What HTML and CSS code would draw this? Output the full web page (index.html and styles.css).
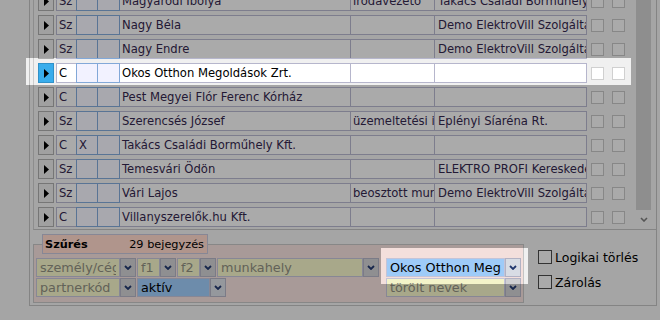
FILE: index.html
```html
<!DOCTYPE html>
<html lang="hu">
<head>
<meta charset="utf-8">
<title>Partnerek</title>
<link rel="stylesheet" href="styles.css">
</head>
<body>
<div class="screen">
  <div class="frame">
    <div class="grid">
      <div class="viewport">
        <div class="rows">
          <div class="row">
            <span class="rbtn"><svg width="5" height="9" viewBox="0 0 5 9"><polygon points="0,0 5,4.5 0,9"/></svg></span>
            <span class="cell c-type">Sz</span><span class="cell c-flag"></span><span class="cell c-flag"></span>
            <span class="cell c-name">Magyaródi Ibolya</span><span class="cell c-job">irodavezető</span><span class="cell c-comp">Takács Családi Borműhely Kft.</span>
            <span class="chk"></span><span class="chk"></span>
          </div>
          <div class="row">
            <span class="rbtn"><svg width="5" height="9" viewBox="0 0 5 9"><polygon points="0,0 5,4.5 0,9"/></svg></span>
            <span class="cell c-type">Sz</span><span class="cell c-flag"></span><span class="cell c-flag"></span>
            <span class="cell c-name">Nagy Béla</span><span class="cell c-job"></span><span class="cell c-comp">Demo ElektroVill Szolgáltató Kft.</span>
            <span class="chk"></span><span class="chk"></span>
          </div>
          <div class="row">
            <span class="rbtn"><svg width="5" height="9" viewBox="0 0 5 9"><polygon points="0,0 5,4.5 0,9"/></svg></span>
            <span class="cell c-type">Sz</span><span class="cell c-flag"></span><span class="cell c-flag"></span>
            <span class="cell c-name">Nagy Endre</span><span class="cell c-job"></span><span class="cell c-comp">Demo ElektroVill Szolgáltató Kft.</span>
            <span class="chk"></span><span class="chk"></span>
          </div>
          <div class="row sel">
            <span class="rbtn"><svg width="5" height="9" viewBox="0 0 5 9"><polygon points="0,0 5,4.5 0,9"/></svg></span>
            <span class="cell c-type">C</span><span class="cell c-flag"></span><span class="cell c-flag"></span>
            <span class="cell c-name">Okos Otthon Megoldások Zrt.</span><span class="cell c-job"></span><span class="cell c-comp"></span>
            <span class="chk"></span><span class="chk"></span>
          </div>
          <div class="row">
            <span class="rbtn"><svg width="5" height="9" viewBox="0 0 5 9"><polygon points="0,0 5,4.5 0,9"/></svg></span>
            <span class="cell c-type">C</span><span class="cell c-flag"></span><span class="cell c-flag"></span>
            <span class="cell c-name">Pest Megyei Flór Ferenc Kórház</span><span class="cell c-job"></span><span class="cell c-comp"></span>
            <span class="chk"></span><span class="chk"></span>
          </div>
          <div class="row">
            <span class="rbtn"><svg width="5" height="9" viewBox="0 0 5 9"><polygon points="0,0 5,4.5 0,9"/></svg></span>
            <span class="cell c-type">Sz</span><span class="cell c-flag"></span><span class="cell c-flag"></span>
            <span class="cell c-name">Szerencsés József</span><span class="cell c-job">üzemeltetési igazgató</span><span class="cell c-comp">Eplényi Síaréna Rt.</span>
            <span class="chk"></span><span class="chk"></span>
          </div>
          <div class="row">
            <span class="rbtn"><svg width="5" height="9" viewBox="0 0 5 9"><polygon points="0,0 5,4.5 0,9"/></svg></span>
            <span class="cell c-type">C</span><span class="cell c-flag">X</span><span class="cell c-flag"></span>
            <span class="cell c-name">Takács Családi Borműhely Kft.</span><span class="cell c-job"></span><span class="cell c-comp"></span>
            <span class="chk"></span><span class="chk"></span>
          </div>
          <div class="row">
            <span class="rbtn"><svg width="5" height="9" viewBox="0 0 5 9"><polygon points="0,0 5,4.5 0,9"/></svg></span>
            <span class="cell c-type">Sz</span><span class="cell c-flag"></span><span class="cell c-flag"></span>
            <span class="cell c-name">Temesvári Ödön</span><span class="cell c-job"></span><span class="cell c-comp">ELEKTRO PROFI Kereskedelmi Kft.</span>
            <span class="chk"></span><span class="chk"></span>
          </div>
          <div class="row">
            <span class="rbtn"><svg width="5" height="9" viewBox="0 0 5 9"><polygon points="0,0 5,4.5 0,9"/></svg></span>
            <span class="cell c-type">Sz</span><span class="cell c-flag"></span><span class="cell c-flag"></span>
            <span class="cell c-name">Vári Lajos</span><span class="cell c-job">beosztott munkatárs</span><span class="cell c-comp">Demo ElektroVill Szolgáltató Kft.</span>
            <span class="chk"></span><span class="chk"></span>
          </div>
          <div class="row">
            <span class="rbtn"><svg width="5" height="9" viewBox="0 0 5 9"><polygon points="0,0 5,4.5 0,9"/></svg></span>
            <span class="cell c-type">C</span><span class="cell c-flag"></span><span class="cell c-flag"></span>
            <span class="cell c-name">Villanyszerelők.hu Kft.</span><span class="cell c-job"></span><span class="cell c-comp"></span>
            <span class="chk"></span><span class="chk"></span>
          </div>
        </div>
      </div>
      <div class="vscroll">
        <div class="thumb"></div>
        <div class="sdown"><svg width="8" height="5" viewBox="0 0 8 5"><polyline points="1,1 4,4 7,1" fill="none" stroke="#7c7c7c" stroke-width="1.6"/></svg></div>
      </div>
    </div>
    <div class="bottom">
      <fieldset class="filter">
        <legend class="ftab"><b>Szűrés</b><span>29 bejegyzés</span></legend>
        <div class="fbody">
          <div class="fleft">
            <div class="frow">
              <div class="combo cb-wide"><span class="cb-text"><span class="cb-val">személy/cég</span></span><span class="cb-btn"><svg width="8" height="5" viewBox="0 0 8 5"><polyline points="1,1 4,4 7,1" fill="none" stroke="#22386e" stroke-width="1.8"/></svg></span></div>
              <div class="combo cb-tiny"><span class="cb-text"><span class="cb-val">f1</span></span><span class="cb-btn"><svg width="8" height="5" viewBox="0 0 8 5"><polyline points="1,1 4,4 7,1" fill="none" stroke="#22386e" stroke-width="1.8"/></svg></span></div>
              <div class="combo cb-tiny"><span class="cb-text"><span class="cb-val">f2</span></span><span class="cb-btn"><svg width="8" height="5" viewBox="0 0 8 5"><polyline points="1,1 4,4 7,1" fill="none" stroke="#22386e" stroke-width="1.8"/></svg></span></div>
              <div class="combo cb-work"><span class="cb-text"><span class="cb-val">munkahely</span></span><span class="cb-btn"><svg width="8" height="5" viewBox="0 0 8 5"><polyline points="1,1 4,4 7,1" fill="none" stroke="#22386e" stroke-width="1.8"/></svg></span></div>
            </div>
            <div class="frow">
              <div class="combo cb-wide"><span class="cb-text"><span class="cb-val">partnerkód</span></span><span class="cb-btn"><svg width="8" height="5" viewBox="0 0 8 5"><polyline points="1,1 4,4 7,1" fill="none" stroke="#22386e" stroke-width="1.8"/></svg></span></div>
              <div class="combo cb-act sel"><span class="cb-text"><span class="cb-val">aktív</span></span><span class="cb-btn"><svg width="8" height="5" viewBox="0 0 8 5"><polyline points="1,1 4,4 7,1" fill="none" stroke="#22386e" stroke-width="1.8"/></svg></span></div>
            </div>
          </div>
          <div class="fright">
            <div class="combo cb-right sel"><span class="cb-text"><span class="cb-val">Okos Otthon Megoldások Zrt.</span></span><span class="cb-btn"><svg width="8" height="5" viewBox="0 0 8 5"><polyline points="1,1 4,4 7,1" fill="none" stroke="#22386e" stroke-width="1.8"/></svg></span></div>
            <div class="combo cb-right"><span class="cb-text"><span class="cb-val">törölt nevek</span></span><span class="cb-btn"><svg width="8" height="5" viewBox="0 0 8 5"><polyline points="1,1 4,4 7,1" fill="none" stroke="#22386e" stroke-width="1.8"/></svg></span></div>
          </div>
        </div>
      </fieldset>
      <div class="flags">
        <label class="flag"><span class="box"></span>Logikai törlés</label>
        <label class="flag"><span class="box"></span>Zárolás</label>
      </div>
    </div>
  </div>
  <svg class="dim" width="660" height="320" viewBox="0 0 660 320">
    <path fill="rgba(0,0,0,0.31)" fill-rule="evenodd" d="M0,0H660V320H0Z M26,58H631V85H26Z M381,248H528V284H381Z"/>
  </svg>
</div>
</body>
</html>
```

FILE: styles.css
```css
* { box-sizing: border-box; }
html, body { margin: 0; padding: 0; }
body {
  background: #f0f0f0;
  font-family: "DejaVu Sans", Verdana, sans-serif;
  color: #000;
}
.screen { position: relative; width: 660px; height: 320px; overflow: hidden; }

.frame {
  margin-left: 29px;
  width: 628px;
  height: 306px;
  border: 1px solid #c0c0c0;
  border-top: 0;
  display: flex;
  flex-direction: column;
}
.grid {
  margin-left: 3px;
  height: 230px;
  border-left: 1px solid #cdcdcd;
  border-bottom: 1px solid #c0c0c0;
  display: flex;
}
.viewport { flex: 1; overflow: hidden; padding-left: 4px; }
.rows { margin-top: -9px; display: flex; flex-direction: column; gap: 4px; }
.row {
  display: flex;
  align-items: center;
  height: 20px;
  font-size: 11.6px;
  color: #33264d;
}
.rbtn {
  width: 16px; height: 20px;
  margin-right: 2px;
  background: #e8e8e8;
  border: 1px solid #ababab;
  display: flex; align-items: center; justify-content: center;
}
.rbtn polygon { fill: #000; }
.cell {
  height: 20px;
  line-height: 18px;
  border: 1px solid #b6b6cc;
  background: #f7f7f7;
  white-space: nowrap;
  overflow: hidden;
  padding: 0 2px;
}
.c-type { width: 20px; border-right: 0; }
.c-flag { width: 22px; border-color: #82a8d8; background: #f4f4fc; }
.c-flag + .c-flag { width: 23px; margin-left: -1px; }
.c-name { width: 231px; border-left: 0; }
.c-job { width: 84px; border-left: 0; padding-right: 0; }
.c-comp { width: 152px; border-left: 0; padding-left: 3px; }
.chk { width: 13px; height: 13px; border: 1px solid #c4c4c4; background: #f6f6f6; margin-left: 4px; }
.chk + .chk { margin-left: 8px; }

.row.sel { color: #000; }
.row.sel .rbtn { background: #39adec; border-color: #3091c8; }
.row.sel .cell { background: #fff; }
.row.sel .c-flag { background: #f2f2ff; }
.row.sel .chk { background: #fff; border-color: #d0d0d0; }

.vscroll { width: 17px; margin-right: 4px; display: flex; flex-direction: column; }
.thumb { height: 210px; margin: 0 1px; background: #cecece; }
.sdown { flex: 1; display: flex; align-items: center; justify-content: center; }

.bottom { flex: 1; display: flex; align-items: flex-start; }
.filter {
  margin: 4px 0 0 3px;
  width: 491px;
  min-width: 0;
  border: 1px solid #c4c4c4;
  background: #f3dfdc;
  padding: 0 2px 5px;
}
.ftab {
  margin-left: 6px;
  padding: 0 3px 0 2px;
  width: 166px;
  height: 20px;
  border: 1px solid #c4c4d8;
  background: #ffd8cb;
  font-size: 11.3px;
  display: flex;
  align-items: center;
  justify-content: space-between;
}
.fbody { display: flex; gap: 7px; margin-top: 4px; }
.fleft { width: 343px; display: flex; flex-direction: column; gap: 1px; }
.fright { width: 135px; display: flex; flex-direction: column; gap: 1px; }
.frow { display: flex; gap: 1px; }
.combo { display: flex; height: 19px; font-size: 12.8px; }
.cb-wide { width: 100px; }
.cb-tiny { width: 39px; }
.cb-work { width: 162px; }
.cb-act { width: 89px; }
.cb-right { width: 135px; }
.cb-text {
  flex: 1;
  min-width: 0;
  background: #f4f4c9;
  border: 1px solid #c4c4d8;
  color: #8e8e80;
  padding: 0 3px;
  line-height: 17px;
  white-space: nowrap;
  overflow: hidden;
}
.cb-val { display: block; overflow: hidden; }
.cb-btn {
  width: 16px;
  background: #cfcfd2;
  border: 1px solid #b2b2c4;
  display: flex; align-items: center; justify-content: center;
}
.combo.sel .cb-text { background: #9ecbf8; color: #000; }
.combo.sel .cb-btn { background: #d8dce4; }

.flags {
  margin: 17px 0 0 14px;
  display: flex;
  flex-direction: column;
  gap: 5px;
  font-size: 12.5px;
}
.flag { display: flex; align-items: center; height: 20px; }
.box { width: 14px; height: 14px; border: 1px solid #4a4a4a; background: #f6f6f6; margin-right: 3px; }

.dim { position: absolute; left: 0; top: 0; pointer-events: none; }
```
